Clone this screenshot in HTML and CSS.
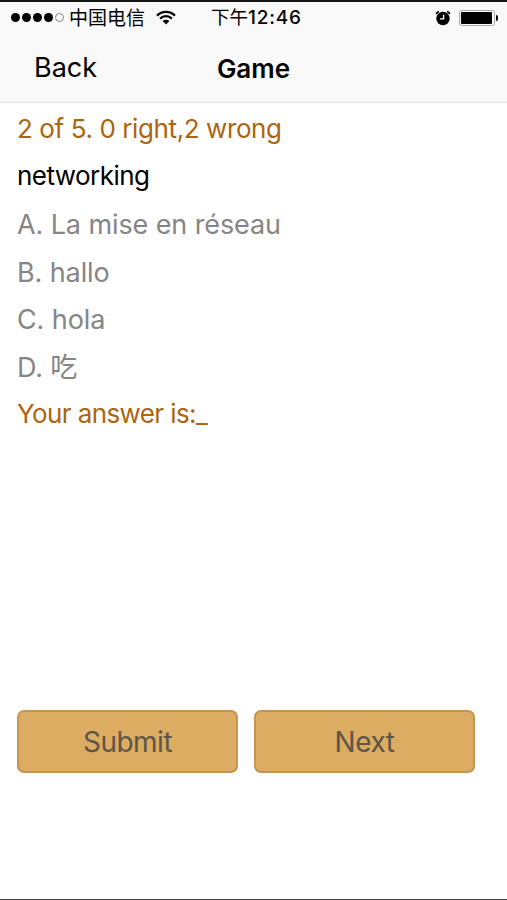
FILE: index.html
```html
<!DOCTYPE html>
<html lang="en">
<head>
    <meta charset="UTF-8">
    <meta name="viewport" content="width=device-width, initial-scale=1.0">
    <title>Game</title>
    <link rel="stylesheet" href="styles.css">
</head>
<body>
    <div class="screen">
        <header>
            <div class="status-bar">
                <div class="signal">
                    <span class="dot"></span>
                    <span class="dot"></span>
                    <span class="dot"></span>
                    <span class="dot"></span>
                    <span class="dot empty"></span>
                </div>
                <span class="carrier">中国电信</span>
                <svg class="wifi" viewBox="0 0 20 15" width="20" height="15">
                    <path d="M1 5.6a12.8 12.8 0 0 1 18 0M4.1 8.6a8.4 8.4 0 0 1 11.8 0" fill="none" stroke="#000" stroke-width="2.2"/>
                    <path d="M6.6 11.1a4.8 4.8 0 0 1 6.8 0L10 14.6z"/>
                </svg>
                <span class="time">下午<span class="clock">12:46</span></span>
                <svg class="alarm" viewBox="0 0 16 16" width="16" height="16">
                    <circle cx="8" cy="8.5" r="6.7"/>
                    <path d="M1 3.8 3.8 1.4M15 3.8 12.2 1.4" stroke="#000" stroke-width="1.8"/>
                    <path d="M8.6 4.8v4.1H5" fill="none" stroke="#fff" stroke-width="1.3"/>
                </svg>
                <div class="battery"><div class="battery-level"></div></div>
                <div class="battery-cap"></div>
            </div>
            <nav class="nav-bar">
                <span class="back">Back</span>
                <h1>Game</h1>
            </nav>
        </header>
        <main>
            <p class="score">2 of 5. 0 right,2 wrong</p>
            <p class="question">networking</p>
            <ul class="options">
                <li>A. La mise en réseau</li>
                <li>B. hallo</li>
                <li>C. hola</li>
                <li>D. 吃</li>
            </ul>
            <p class="answer">Your answer is:_</p>
        </main>
        <div class="buttons">
            <button class="submit">Submit</button>
            <button class="next">Next</button>
        </div>
    </div>
</body>
</html>
```
FILE: styles.css
```css
* {
    box-sizing: border-box;
}
body {
    margin: 0;
    font-family: Inter, "Noto Sans CJK SC", sans-serif;
    background-color: white;
    color: #000;
}
.screen {
    display: flex;
    flex-direction: column;
    width: 507px;
    height: 900px;
    border-top: 2px solid #151315;
    border-bottom: 1px solid #444;
    overflow: hidden;
}
header {
    height: 101px;
    background-color: #f9f9f9;
    border-bottom: 1px solid #e2e2e2;
}
.status-bar {
    display: flex;
    align-items: center;
    height: 31px;
    padding-left: 11px;
}
.signal {
    display: flex;
    gap: 2px;
}
.dot {
    width: 9px;
    height: 9px;
    border-radius: 50%;
    background-color: #000;
}
.dot.empty {
    background-color: transparent;
    border: 1px solid #888;
}
.carrier {
    margin-left: 5px;
    padding-top: 2px;
    width: 78px;
    font-size: 19px;
    line-height: 30px;
}
.wifi {
    margin-left: 9px;
}
.time {
    margin-left: 35px;
    width: 94px;
    font-size: 18.5px;
    line-height: 30px;
    white-space: nowrap;
}
.clock {
    font-size: 19px;
    font-weight: 500;
    letter-spacing: 0.8px;
}
.alarm {
    margin-left: 130px;
}
.battery {
    margin-left: 8px;
    width: 36px;
    height: 16px;
    padding: 1px 2px 1px 1px;
    border: 1px solid #aaa;
    border-radius: 3px;
}
.battery-level {
    height: 12px;
    border-radius: 1px;
    background-color: #000;
}
.battery-cap {
    width: 2px;
    height: 6px;
    margin-left: 1px;
    border-radius: 0 3px 3px 0;
    background-color: #000;
}
.nav-bar {
    display: grid;
    grid-template-columns: 1fr auto 1fr;
    align-items: center;
    height: 70px;
    padding: 0 34px;
}
.back {
    padding-bottom: 2px;
    font-size: 27px;
}
h1 {
    margin: 0;
    font-size: 26px;
    font-weight: 600;
}
main {
    padding: 2px 17px 0;
    font-size: 26px;
    line-height: 47px;
}
p {
    margin: 0;
}
.score,
.answer {
    color: #ad640e;
}
.score {
    letter-spacing: -0.4px;
}
.question {
    letter-spacing: -0.55px;
}
.answer {
    margin-top: -1px;
    letter-spacing: -0.6px;
}
.options {
    list-style: none;
    margin: 0;
    padding: 2px 0 0;
    color: #858585;
    font-size: 27px;
    line-height: 47.5px;
    letter-spacing: -0.1px;
}
.buttons {
    display: flex;
    gap: 16px;
    margin-top: auto;
    margin-bottom: 126px;
    padding-left: 17px;
}
button {
    width: 221px;
    height: 63px;
    padding: 0;
    font-family: inherit;
    font-size: 28px;
    letter-spacing: -0.5px;
    color: #5d5549;
    background-color: #dbac61;
    border: 2px solid #c59450;
    border-radius: 7px;
}
```
